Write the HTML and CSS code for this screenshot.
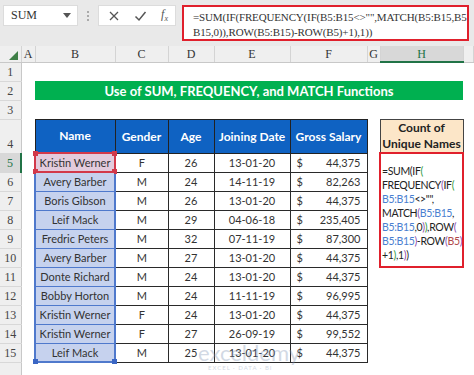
FILE: index.html
```html
<!DOCTYPE html>
<html lang="en">
<head>
    <meta charset="UTF-8">
    <title>SUM FREQUENCY MATCH</title>
    <link rel="stylesheet" href="styles.css">
</head>
<body>

<div class="toolbar">
    <div class="namebox">
        <span>SUM</span>
        <svg width="8" height="5" viewBox="0 0 8 5"><path d="M0 0h8L4 5z" fill="#555"/></svg>
    </div>
    <div class="grip">
        <i></i><i></i><i></i>
    </div>
    <div class="fxbox">
        <svg width="12" height="12" viewBox="0 0 12 12"><path d="M2 2l8 8M10 2l-8 8" stroke="#555" stroke-width="1.3" fill="none"/></svg>
        <svg width="13" height="12" viewBox="0 0 13 12"><path d="M1.5 6.5l3.5 3.5 6.5-8" stroke="#555" stroke-width="1.5" fill="none"/></svg>
        <span class="fx">f<sub>x</sub></span>
    </div>
    <div class="formula">=SUM(IF(FREQUENCY(IF(B5:B15&lt;&gt;"",MATCH(B5:B15,B5:<br>B15,0)),ROW(B5:B15)-ROW(B5)+1),1))</div>
</div>

<div class="sheet">
    <table class="grid">
        <colgroup>
            <col style="width:21px"><col style="width:14px"><col style="width:80px"><col style="width:53px">
            <col style="width:46px"><col style="width:76px"><col style="width:77px"><col style="width:13px">
            <col style="width:83px"><col>
        </colgroup>
        <tr class="colhdr">
            <th class="corner"><span class="tri"></span></th>
            <th>A</th><th>B</th><th>C</th><th>D</th><th>E</th><th>F</th><th>G</th><th class="on">H</th><th></th>
        </tr>
        <tr class="row"><th class="rh">1</th><td colspan="9"></td></tr>
        <tr class="row">
            <th class="rh">2</th><td></td>
            <td colspan="7" class="title">Use of SUM, FREQUENCY, and MATCH Functions</td><td></td>
        </tr>
        <tr class="row"><th class="rh">3</th><td colspan="9"></td></tr>
        <tr class="row tall">
            <th class="rh">4</th><td></td>
            <td class="hd">Name</td><td class="hd">Gender</td><td class="hd">Age</td>
            <td class="hd">Joining Date</td><td class="hd">Gross Salary</td><td></td>
            <td class="count-hd">Count of<br>Unique Names</td><td></td>
        </tr>
        <tr class="row">
            <th class="rh on">5</th><td></td>
            <td class="nm first">Kristin Werner<span class="h tl"></span><span class="h tr"></span><span class="h bl"></span><span class="h br"></span></td>
            <td class="c">F</td><td class="c">26</td><td class="c">13-01-20</td>
            <td class="c"><div class="money"><span>$</span><span>44,375</span></div></td><td></td>
            <td rowspan="6" class="fcell">=SUM(IF<b class="g">(</b><br>FREQUENCY<b class="p">(</b>IF<b class="g">(</b><br><b class="bl">B5:B15</b>&lt;&gt;"",<br>MATCH<b class="p">(</b><b class="bl">B5:B15</b>,<br><b class="bl">B5:B15</b>,0<b class="p">)</b><b class="g">)</b>,ROW<b class="p">(</b><br><b class="bl">B5:B15</b><b class="p">)</b>-ROW<b class="p">(</b><b class="rd">B5</b><b class="p">)</b><br>+1<b class="g">)</b>,1<b class="p">)</b>)</td>
            <td></td>
        </tr>
        <tr class="row"><th class="rh">6</th><td></td><td class="nm">Avery Barber</td><td class="c">M</td><td class="c">24</td><td class="c">14-11-19</td><td class="c"><div class="money"><span>$</span><span>82,263</span></div></td><td></td><td></td></tr>
        <tr class="row"><th class="rh">7</th><td></td><td class="nm">Boris Gibson</td><td class="c">M</td><td class="c">26</td><td class="c">13-01-20</td><td class="c"><div class="money"><span>$</span><span>44,375</span></div></td><td></td><td></td></tr>
        <tr class="row"><th class="rh">8</th><td></td><td class="nm">Leif Mack</td><td class="c">M</td><td class="c">29</td><td class="c">04-06-18</td><td class="c"><div class="money"><span>$</span><span>235,405</span></div></td><td></td><td></td></tr>
        <tr class="row"><th class="rh">9</th><td></td><td class="nm">Fredric Peters</td><td class="c">M</td><td class="c">32</td><td class="c">07-11-19</td><td class="c"><div class="money"><span>$</span><span>87,300</span></div></td><td></td><td></td></tr>
        <tr class="row"><th class="rh">10</th><td></td><td class="nm">Avery Barber</td><td class="c">M</td><td class="c">27</td><td class="c">13-01-20</td><td class="c"><div class="money"><span>$</span><span>44,375</span></div></td><td></td><td></td></tr>
        <tr class="row"><th class="rh">11</th><td></td><td class="nm">Donte Richard</td><td class="c">M</td><td class="c">24</td><td class="c">13-01-20</td><td class="c"><div class="money"><span>$</span><span>44,375</span></div></td><td></td><td></td><td></td></tr>
        <tr class="row"><th class="rh">12</th><td></td><td class="nm">Bobby Horton</td><td class="c">M</td><td class="c">24</td><td class="c">11-11-19</td><td class="c"><div class="money"><span>$</span><span>96,995</span></div></td><td></td><td></td><td></td></tr>
        <tr class="row"><th class="rh">13</th><td></td><td class="nm">Kristin Werner</td><td class="c">F</td><td class="c">24</td><td class="c">13-01-20</td><td class="c"><div class="money"><span>$</span><span>44,375</span></div></td><td></td><td></td><td></td></tr>
        <tr class="row"><th class="rh">14</th><td></td><td class="nm">Kristin Werner</td><td class="c">F</td><td class="c">27</td><td class="c">26-09-19</td><td class="c"><div class="money"><span>$</span><span>99,552</span></div></td><td></td><td></td><td></td></tr>
        <tr class="row"><th class="rh">15</th><td></td><td class="nm last">Leif Mack<span class="h bl blue"></span><span class="h br blue"></span></td><td class="c">M</td><td class="c">25</td><td class="c">13-01-20</td><td class="c"><div class="money"><span>$</span><span>44,375</span></div></td><td></td><td></td><td></td></tr>
        <tr class="row"><th class="rh"></th><td colspan="9"></td></tr>
    </table>
    <div class="watermark">
        <span class="wm-name">exceldemy</span>
        <span class="wm-sub">EXCEL · DATA · BI</span>
    </div>
</div>

</body>
</html>
```

FILE: styles.css
```css
body {
    margin: 0;
    width: 474px;
    height: 375px;
    overflow: hidden;
    background: #fff;
    font-family: Lato, "Liberation Sans", sans-serif;
}
.toolbar {
    display: flex;
    align-items: flex-start;
    height: 46px;
    padding: 5px 4px 0 3px;
    box-sizing: border-box;
    background: #e9e9e9;
}
.namebox {
    display: flex;
    align-items: center;
    justify-content: space-between;
    width: 75px;
    height: 21px;
    padding: 0 6px 0 7px;
    box-sizing: border-box;
    background: #fff;
    border: 1px solid #dcdcdc;
    font-family: "Liberation Serif", serif;
    font-size: 12px;
    color: #333;
}
.grip {
    display: flex;
    flex-direction: column;
    gap: 2px;
    margin: 6px 9px 0 9px;
}
.grip i {
    width: 2px;
    height: 2px;
    background: #aaa;
}
.fxbox {
    display: flex;
    align-items: center;
    justify-content: space-between;
    width: 78px;
    height: 21px;
    padding: 0 7px 0 9px;
    box-sizing: border-box;
    background: #fff;
    border: 1px solid #dcdcdc;
}
.fx {
    font-family: "Liberation Serif", serif;
    font-style: italic;
    font-size: 12px;
    color: #555;
}
.fx sub {
    font-size: 8px;
}
.formula {
    width: 287px;
    height: 36px;
    margin-left: 6px;
    padding: 3px 0 0 9px;
    box-sizing: border-box;
    border: 2px solid #e0202c;
    background: #fff;
    font-family: "Liberation Serif", serif;
    font-size: 11px;
    letter-spacing: -0.15px;
    line-height: 15px;
    color: #333;
    white-space: nowrap;
    overflow: hidden;
}
.sheet {
    position: relative;
}
.grid {
    width: 474px;
    table-layout: fixed;
    border-collapse: collapse;
    font-size: 11px;
    color: #333;
}
.grid td, .grid th {
    padding: 0;
}
.colhdr {
    height: 16px;
    background: #efefef;
}
.colhdr th {
    font-family: "Liberation Serif", serif;
    font-weight: normal;
    font-size: 12px;
    color: #333;
    border-right: 1px solid #d4d4d4;
    border-bottom: 1px solid #c8c8c8;
    line-height: 14px;
}
.colhdr th.on {
    background: #d8d8d8;
    border-bottom: 2px solid #217346;
    color: #217346;
}
.corner {
    position: relative;
}
.tri {
    position: absolute;
    right: 3px;
    bottom: 2px;
    width: 0;
    height: 0;
    border-left: 9px solid transparent;
    border-bottom: 9px solid #3f7f47;
}
.row {
    height: 19px;
}
.row.tall {
    height: 34px;
}
.rh {
    background: #efefef;
    font-family: "Liberation Serif", serif;
    font-weight: normal;
    font-size: 12px;
    color: #444;
    border-right: 1px solid #c8c8c8;
    border-bottom: 1px solid #d8d8d8;
    vertical-align: bottom;
    line-height: 17px;
}
.rh.on {
    background: #d8d8d8;
    border-right: 2px solid #217346;
    color: #217346;
}
.title {
    background: #00b050;
    color: #fff;
    font-weight: bold;
    font-size: 13px;
    text-align: center;
}
.hd {
    background: #0f62c2;
    color: #fff;
    font-weight: bold;
    font-size: 12px;
    text-align: center;
    border: 1px solid #222;
}
.count-hd {
    background: #fce6c8;
    border: 1px solid #444;
    font-weight: bold;
    font-size: 12px;
    line-height: 16px;
    text-align: center;
    color: #222;
}
.c {
    text-align: center;
    border: 1px solid #2a2a2a;
}
.money {
    display: flex;
    justify-content: space-between;
    padding: 0 6px 0 6px;
}
.nm {
    position: relative;
    text-align: center;
    background: #c6d2ee;
    border: 1px solid #4f79cc;
    border-left: 2px solid #4f79cc;
    border-right: 2px solid #4f79cc;
}
.nm.first {
    background: #e3cbdc;
    border: 2px solid #d2394a;
}
.nm.last {
    border-bottom: 2px solid #4f79cc;
}
.h {
    position: absolute;
    width: 5px;
    height: 5px;
    background: #d2394a;
}
.h.blue {
    background: #3a66c4;
}
.h.tl { top: -3px; left: -3px; }
.h.tr { top: -3px; right: -3px; }
.h.bl { bottom: -3px; left: -3px; }
.h.br { bottom: -3px; right: -3px; }
.fcell {
    border: 2px solid #e0202c;
    vertical-align: top;
    padding: 10px 0 0 1px !important;
    font-size: 10.5px;
    letter-spacing: -0.35px;
    line-height: 14px;
    white-space: nowrap;
    overflow: hidden;
    color: #222;
}
.fcell b {
    font-weight: normal;
}
.fcell .g { color: #2f9a3c; }
.fcell .p { color: #8a4bb0; }
.fcell .bl { color: #4a7fd0; }
.fcell .rd { color: #b04a4a; }
.watermark {
    position: absolute;
    left: 198px;
    top: 296px;
    display: flex;
    flex-direction: column;
    align-items: flex-start;
    opacity: 0.35;
    pointer-events: none;
}
.wm-name {
    font-size: 22px;
    line-height: 22px;
    color: #7f93b3;
}
.wm-sub {
    font-size: 6px;
    letter-spacing: 1px;
    color: #7f93b3;
    margin-left: 10px;
}
```
